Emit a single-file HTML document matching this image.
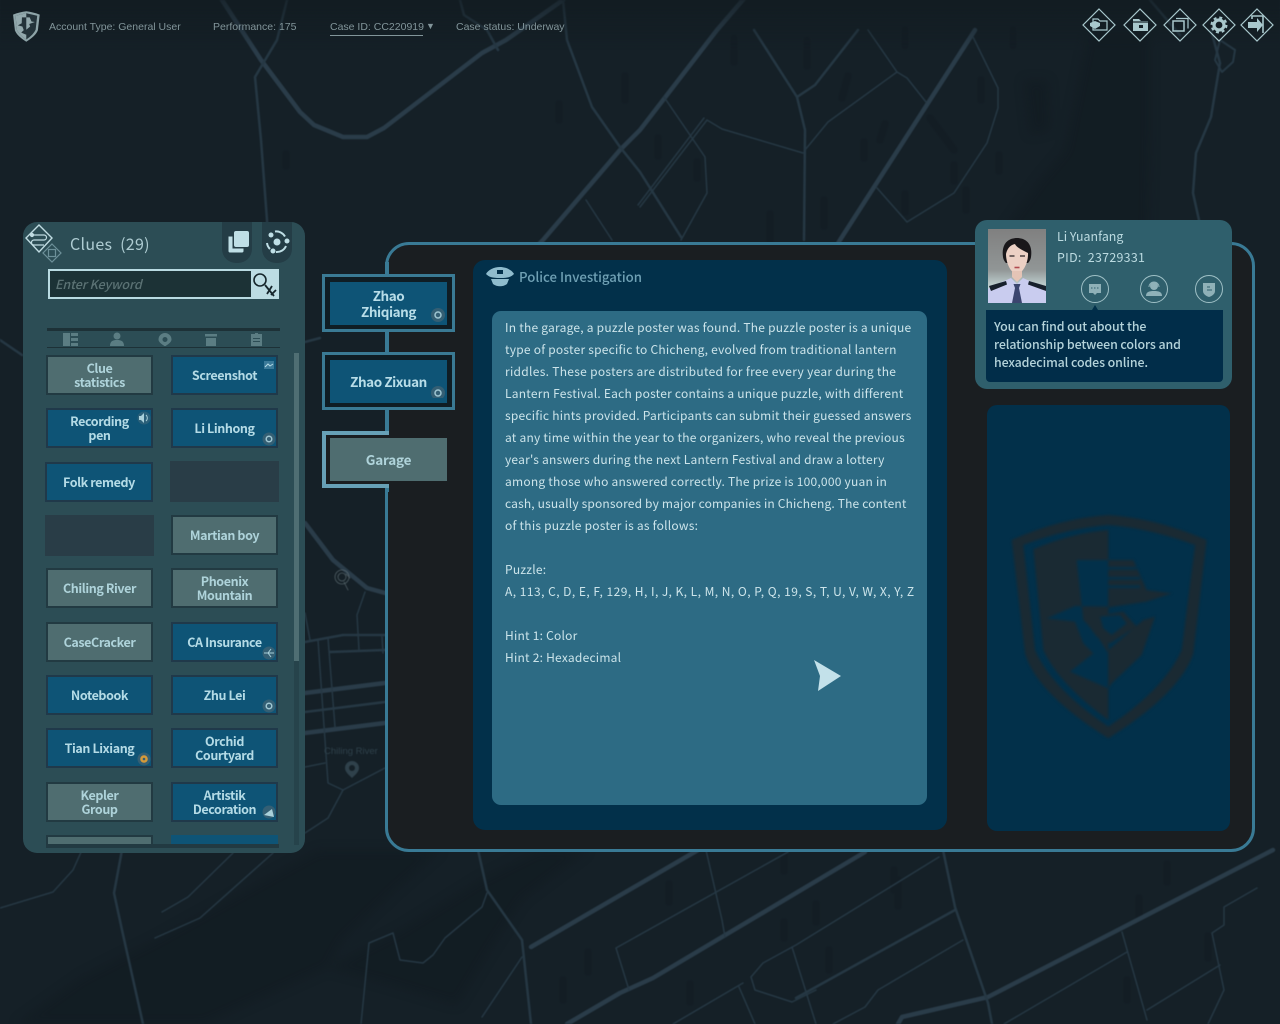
<!DOCTYPE html>
<html><head><meta charset="utf-8"><style>
html,body{margin:0;padding:0;background:#152027;width:1280px;height:1024px;overflow:hidden}
body{font-family:"Noto Sans CJK SC","Liberation Sans",sans-serif}
#w{position:absolute;left:0;top:0;width:1280px;height:1024px;overflow:hidden;filter:blur(.3px)}
.a{position:absolute}
.t{position:absolute;font:10.5px "Liberation Sans",sans-serif;color:#82959a;top:21px;white-space:nowrap}
.b{position:absolute;width:107px;height:40px;box-sizing:border-box;border:2px solid #20394a;background:#0e5476;color:#b4dbe6;font-weight:700;font-size:12.500px;line-height:14px;display:flex;align-items:center;justify-content:center;text-align:center;letter-spacing:-.4px}
.g{background:#4f6d70;border-color:#223a42;color:#aed3da}
.e{background:#293d47;border-color:#293d47}
.tab{position:absolute;left:322px;width:133px;box-sizing:border-box;border:3px solid #3a7a94;background:#0f1d24}
.ti{position:absolute;left:330px;width:117px;box-sizing:border-box;padding-bottom:2px;background:#0e5476;color:#b8dde8;font-weight:700;font-size:13.500px;line-height:16px;display:flex;align-items:center;justify-content:center;text-align:center;letter-spacing:-.45px}
.c{position:absolute;width:28px;height:28px;box-sizing:border-box;border:1px solid #9fc0c6;border-radius:50%}
</style></head><body><div id="w">
<svg class="a" style="left:0;top:0;filter:blur(.5px)" width="1280" height="1024" fill="none" stroke="#263844" stroke-linejoin="round" stroke-linecap="round">
<defs><linearGradient id="tg" x1="0" y1="0" x2="0" y2="1"><stop offset="0" stop-color="#111a1f" stop-opacity=".6"/><stop offset="1" stop-color="#111a1f" stop-opacity="0"/></linearGradient></defs>
<g fill="#111a20" stroke="none" opacity=".5" style="filter:blur(5px)">
<path d="M1089 30L1150 30L1150 130L1148 235L1000 235L1040 180L1065 150L1075 100Z"/>
<path d="M1024 80L1048 80L1050 130L1030 135Z"/>
<path d="M16 1024L82 977L155 940L318 850L441 850L392 893L343 940L327 968L204 1024Z"/>
<path d="M539 850L588 850L522 900L490 950L457 1005L384 983L327 968L400 930L480 880Z"/>
</g>
<g stroke="#111a20" stroke-width="7" opacity=".4">
<path d="M286 154v12M559 104v16M625 76v24M734 38v24M807 40v26M848 76l-6 22M658 138v18M697 162v16M770 214v26M824 200v26M885 124l-5 16M864 142v16M930 118l24 32M999 155v16M954 165v16M981 80v20M966 190v20M905 194v18M905 30v16M1013 30v16"/>
<path d="M669 884v18M898 880v26M816 904v18M784 922v16M829 950v20M588 952v20M563 980v20M690 984v18M1139 898v18M1167 864v18M1208 936v22M1127 980v20M784 855v16M894 870v20"/>
</g>
<g stroke-width="4.500" stroke="#2a3c49">
<path d="M563 0L506 40L482 53L384 128L367 137L343 137L314 125L300 112L261 60L222 0"/>
<path d="M640 130L717 30L760 -20M640 130L620 150L543 240L440 345"/>
<path d="M975 30L840 240L700 470"/>
<path d="M698 850L531 947"/><path d="M865 852L653 978L620 993L567 1024"/>
<path d="M1273 850L988 997L902 1017L898 1024"/>
<path d="M305 693L385 683M305 733L385 723"/>
<path d="M305 523L333 560L367 588L385 593"/>
</g>
<g stroke-width="2.500">
<path d="M287 0L277 40L255 77L261 140L267 220L270 300"/>
<path d="M563 0L567 40L592 107L620 147L640 172L681 237"/>
<path d="M754 30L797 97L805 130L804 240M797 97L815 85L858 30"/>
<path d="M478 850L487 890L522 940L531 1024"/>
<path d="M955 910L796 998"/><path d="M943 850L955 907L988 1003L992 1024"/>
<path d="M305 642L343 635L385 635M330 652L385 650M305 712L385 702"/>
<path d="M122 850L114 893L122 930L143 1024"/>
<path d="M1150 0L1180 35M1211 30L1220 63L1211 117L1196 153L1193 193L1199 220"/>
<path d="M1220 40L1235 50L1233 62L1222 72L1215 60Z" stroke-width="2"/>
<path d="M460 0L464 15L487 30L498 50"/>
<path d="M0 340L22 355M305 342L320 338"/>
</g>
<g stroke-width="1.500">
<path d="M664 97L705 157L707 193L681 240"/>
<path d="M805 150L828 122L897 72L868 30M897 72L907 78L926 102"/>
<path d="M973 37L998 88L998 108L987 143L954 193L907 222L877 188"/>
<path d="M707 120L722 129L803 153M707 120L640 207M704 118L638 205"/>
<path d="M586 200L612 240"/>
<path d="M82 850L73 870L53 892L0 908"/>
<path d="M233 853L188 897L162 912M273 853L200 918L155 938"/>
<path d="M487 893L482 907L445 938L433 955L423 963L400 960L393 933L369 943L361 1024"/>
<path d="M522 957L482 1017"/>
<path d="M706 850L722 920L725 937"/>
<path d="M788 852L616 948L629 990"/>
<path d="M939 857L796 945L763 963L751 977L755 990L792 1002L816 990"/>
<path d="M963 940L878 990L865 1007L833 1024"/>
<path d="M743 983L673 1024M739 987L755 1024M792 947L816 1024"/>
<path d="M1257 888L1224 907L1224 925L1212 933L1224 990L1208 1024"/>
<path d="M1122 932L1147 1020M1127 952L1004 1024M1220 965L1147 1010"/>
<path d="M365 592L357 615L359 650"/>
<path d="M318 640L328 783L343 790L385 768M328 638L335 727"/>
<path d="M382 637L383 653M305 767L325 763M343 790L328 818L305 833M305 613L310 640"/>
</g>
<g stroke="#6b7b81" stroke-width=".8" fill="none" opacity=".7"><circle cx="342" cy="577" r="7"/><circle cx="342" cy="577" r="4"/><path d="M344 582L348 590M346 574L350 578"/></g>
<path d="M352 761a7 7 0 0 1 7 7c0 4-4 7-7 10c-3-3-7-6-7-10a7 7 0 0 1 7-7Z" fill="#2f414b" stroke="none"/><circle cx="352" cy="768" r="3" fill="#152027" stroke="none"/>
<text x="324" y="754" font-family="Liberation Sans" font-size="9.500" fill="#2f414b" stroke="none">Chiling River</text>
<rect x="0" y="0" width="1280" height="50" fill="url(#tg)" stroke="none"/>
</svg>

<!-- top bar -->
<svg class="a" style="left:13px;top:11px" width="27" height="31" viewBox="95 100 590 680">
<path d="M385 105Q240 120 95 180L135 520Q170 640 385 775Q600 640 640 520L680 180Q530 120 385 105Z" fill="#8ea4a8"/>
<path d="M385 150L150 205L180 510Q230 620 385 725Q540 620 590 510L625 205Z" fill="#24333a"/>
<path d="M385 150L150 205L180 510Q230 620 385 725Z" fill="#93a9ad"/>
<path d="M290 240L460 240L500 330L575 340L450 385L470 440L410 530L385 620L275 575L330 520L300 440L200 415L285 370Z" fill="#24333a"/>
<path d="M385 240H460L500 330L575 340L450 385L470 440L385 510Z" fill="#93a9ad"/>
</svg>
<div class="t" style="left:49px;top:21px">Account Type: General User</div>
<div class="t" style="left:213px;top:21px">Performance: 175</div>
<div class="t" style="left:330px;top:21px">Case ID: CC220919</div>
<div class="a" style="left:330px;top:35px;width:93px;height:1px;background:#82959a"></div>
<div class="t" style="left:426px;top:21px;font-size:9px">▼</div>
<div class="t" style="left:456px;top:21px">Case status: Underway</div>
<svg class="a" style="left:1060px;top:0" width="220" height="50" fill="none" stroke="#a9c8cd" stroke-width="1.200">
<path d="M39 9L55 25L39 41L23 25Z"/><path d="M33 19h5l2 2h7v9H33z"/><path d="M30 23l5-2l5 2v3l-5 3l-5-3z" fill="#a9c8cd" stroke="none"/>
<path d="M80 9L96 25L80 41L64 25Z"/><path d="M73 19h6l2 2h7v10H73z" fill="#a9c8cd" stroke="none"/><rect x="79" y="25" width="4" height="3" fill="#152027" stroke="none"/><path d="M73 22h15" stroke="#152027"/>
<path d="M120 9L136 25L120 41L104 25Z"/><rect x="113" y="21" width="11" height="10" stroke-width="1.500"/><path d="M116 18.500h12v10" />
<path d="M159 9L175 25L159 41L143 25Z"/><circle cx="159" cy="25" r="5" stroke-width="3.200"/><circle cx="159" cy="25" r="7.500" stroke-width="2" stroke-dasharray="3 2.900"/>
<path d="M197 9L213 25L197 41L181 25Z"/><path d="M192 19V16h11v17" stroke-width="1.600"/><path d="M188 22h9v-4l6 7l-6 7v-4h-9z" fill="#a9c8cd" stroke="none"/>
</svg>

<!-- clues panel -->
<div class="a" style="left:23px;top:222px;width:282px;height:631px;background:#2c4d55;border-radius:14px"></div>
<svg class="a" style="left:23px;top:222px" width="50" height="45" fill="none" stroke="#c0dce2" stroke-width="1.200">
<path d="M16 3L29 16L16 30L3 16Z" stroke-width="1.400"/><path d="M9 13h12a2.500 2.500 0 0 1 0 5H11a2.500 2.500 0 0 0 0 5h10" /><circle cx="9" cy="13" r="1.500" fill="#c0dce2"/>
<path d="M29 22L38 31L29 40L20 31Z" stroke="#6d9099"/><rect x="25.500" y="27.500" width="7" height="7" stroke="#6d9099"/>
</svg>
<div class="a" style="left:70px;top:232px;font-size:16px;line-height:22px;color:#aeccd2;white-space:pre;letter-spacing:.3px">Clues  (29)</div>
<div class="a" style="left:222px;top:222px;width:30px;height:41px;background:#243d46;border-radius:0 0 14px 14px"></div>
<div class="a" style="left:262px;top:222px;width:30px;height:41px;background:#243d46;border-radius:0 0 14px 14px"></div>
<svg class="a" style="left:222px;top:226px" width="72" height="30" fill="#bfdfe6">
<rect x="12" y="5" width="15" height="16" rx="2"/><path d="M6 10h5v12h11v3a2 2 0 0 1-2 2H8a2 2 0 0 1-2-2z" stroke="#243d46"/>
<circle cx="55" cy="16" r="3.500"/><circle cx="49" cy="9" r="2.500"/><circle cx="65" cy="15" r="2.500"/><circle cx="51" cy="25" r="2.500"/>
<path d="M45 17a10 10 0 0 0 3 6M54 26a10 10 0 0 0 10-6M53 5.500a10 10 0 0 1 10 5" fill="none" stroke="#bfdfe6" stroke-width="2"/>
</svg>
<div class="a" style="left:48px;top:269px;width:231px;height:30px;box-sizing:border-box;border:2px solid #b9dbe2;background:#1c3236"></div>
<div class="a" style="left:251px;top:269px;width:28px;height:30px;background:#bcdce3"></div>
<svg class="a" style="left:251px;top:269px" width="28" height="30" fill="none" stroke="#16262c" stroke-width="1.600"><circle cx="9" cy="11" r="6"/><path d="M14 16l9 11M21 17l-5 8M25 21l-5 5" stroke-width="1.800"/></svg>
<div class="a" style="left:55px;top:275px;font-size:12.500px;line-height:18px;font-style:italic;color:#5b7274;font-weight:500;letter-spacing:-.1px">Enter Keyword</div>
<div class="a" style="left:47px;top:328px;width:233px;height:3px;background:#1d3137"></div>
<div class="a" style="left:47px;top:347px;width:233px;height:1px;background:#1d3137"></div>
<svg class="a" style="left:47px;top:332px" width="233" height="14" fill="#5b7d83">
<path d="M16 1h7v13h-7zM24 1h7v3h-7zM24 6h7v3h-7zM24 11h7v3h-7z"/>
<circle cx="70" cy="4" r="3.500"/><path d="M63 14c0-5 3-6 7-6s7 1 7 6z"/>
<path fill-rule="evenodd" d="M118 1a6.500 6.500 0 0 1 6.500 6.500c0 3-4 5-6.500 7c-2.500-2-6.500-4-6.500-7A6.500 6.500 0 0 1 118 1zM118 5a2.500 2.500 0 1 0 .01 0z"/>
<path d="M158 2h12v2.500h-12zM159 6h10v8h-10z"/><path fill-rule="evenodd" d="M204 2h4v-1h3v1h4v12h-11zM206 6v1h7v-1zM206 9v1h7v-1z"/>
</svg>
<div class="b g" style="left:46px;top:355px">Clue<br>statistics</div>
<div class="b" style="left:171px;top:355px">Screenshot</div>
<div class="b" style="left:46px;top:408px">Recording<br>pen</div>
<div class="b" style="left:171px;top:408px">Li Linhong</div>
<div class="b" style="left:45px;top:462px;width:108px">Folk remedy</div>
<div class="b e" style="left:170px;top:461px;width:109px;height:41px"></div>
<div class="b e" style="left:45px;top:515px;width:109px;height:41px"></div>
<div class="b g" style="left:171px;top:515px">Martian boy</div>
<div class="b g" style="left:46px;top:568px">Chiling River</div>
<div class="b g" style="left:171px;top:568px">Phoenix<br>Mountain</div>
<div class="b g" style="left:46px;top:622px">CaseCracker</div>
<div class="b" style="left:171px;top:622px">CA Insurance</div>
<div class="b" style="left:46px;top:675px">Notebook</div>
<div class="b" style="left:171px;top:675px">Zhu Lei</div>
<div class="b" style="left:46px;top:728px">Tian Lixiang</div>
<div class="b" style="left:171px;top:728px">Orchid<br>Courtyard</div>
<div class="b g" style="left:46px;top:782px">Kepler<br>Group</div>
<div class="b" style="left:171px;top:782px">Artistik<br>Decoration</div>
<div class="a" style="left:46px;top:835px;width:107px;height:10px;box-sizing:border-box;border:2px solid #223a42;border-bottom:0;background:#4f6d70;overflow:hidden"></div>
<div class="a" style="left:171px;top:835px;width:107px;height:10px;background:#0e5476"></div>
<div class="a" style="left:46px;top:844px;width:233px;height:4px;background:#223a42"></div>
<div class="a" style="left:294px;top:353px;width:5px;height:492px;background:#26434b"></div>
<div class="a" style="left:294px;top:353px;width:5px;height:308px;background:#4f6e73"></div>
<svg class="a" style="left:0;top:0;pointer-events:none" width="300" height="850">
<rect x="264" y="361" width="10" height="8" fill="#3a7a99"/><path d="M265 367l3-3l2 2l3-2" stroke="#b4dbe6" fill="none"/>
<circle cx="144" cy="418" r="6.500" fill="#2b6079"/><path d="M139 416h2l3-3v10l-3-3h-2z" fill="#a9d0da"/><path d="M146 415a4 4 0 0 1 0 6" stroke="#a9d0da" fill="none"/>
<circle cx="269" cy="439" r="6.500" fill="#345f74"/><circle cx="269" cy="439" r="2.800" fill="none" stroke="#9fc6d2" stroke-width="1.500"/>
<circle cx="269" cy="653" r="6.500" fill="#345f74"/><path d="M264 653h10M268 653l3-4M268 653l3 4" stroke="#a9d0da" fill="none"/>
<circle cx="269" cy="706" r="6.500" fill="#345f74"/><circle cx="269" cy="706" r="2.800" fill="none" stroke="#9fc6d2" stroke-width="1.500"/>
<circle cx="144" cy="759" r="6.500" fill="#345f74"/><circle cx="144" cy="759" r="3.800" fill="#d49a3a"/><circle cx="144" cy="759" r="1.300" fill="#345f74"/>
<circle cx="269" cy="812" r="6.500" fill="#345f74"/><path d="M264 815l8-6l2 8z" fill="#a9d0da"/>
</svg>

<!-- main frame -->
<div class="a" style="left:385px;top:242px;width:870px;height:610px;box-sizing:border-box;border:3px solid #397a95;border-radius:24px;background:#1a1e21"></div>
<div class="a" style="left:385px;top:262px;width:4px;height:230px;background:#397a95"></div>
<div class="tab" style="top:274px;height:58px"></div>
<div class="ti" style="top:282px;height:43px">Zhao<br>Zhiqiang</div>
<div class="tab" style="top:352px;height:58px"></div>
<div class="ti" style="top:360px;height:43px">Zhao Zixuan</div>
<div class="a" style="left:322px;top:431px;width:67px;height:57px;box-sizing:border-box;border:4px solid #67a0b6;border-right:0;background:#1a1e21"></div>
<div class="ti" style="top:438px;height:43px;background:#4f6d70;color:#afd3da;letter-spacing:-.2px">Garage</div>
<svg class="a" style="left:430px;top:308px" width="16" height="90"><circle cx="8" cy="7" r="7" fill="#345f74"/><circle cx="8" cy="7" r="3" fill="none" stroke="#9fc6d2" stroke-width="1.500"/><circle cx="8" cy="85" r="7" fill="#345f74"/><circle cx="8" cy="85" r="3" fill="none" stroke="#9fc6d2" stroke-width="1.500"/></svg>

<div class="a" style="left:473px;top:260px;width:474px;height:570px;background:#02304a;border-radius:12px"></div>
<svg class="a" style="left:486px;top:266px" width="29" height="22" fill="#8fbccd"><path d="M14 1C8 1 2 4 0 8c3 3 6 4 14 4s11-1 14-4c-2-4-8-7-14-7z"/><path d="M5 13h18l-2 5c-4 3-10 3-14 0z"/><rect x="11" y="4" width="6" height="4" fill="#02304a"/></svg>
<div class="a" style="left:519px;top:267px;font-size:13.200px;line-height:20px;color:#6fa0b4;font-weight:500;white-space:nowrap">Police Investigation</div>
<div class="a" style="left:492px;top:311px;width:435px;height:494px;background:#2d6b84;border-radius:9px"></div>
<div class="a" style="left:505px;top:317px;font-size:12px;line-height:22px;color:#cce4ea;white-space:nowrap;letter-spacing:.23px">In the garage, a puzzle poster was found. The puzzle poster is a unique<br>type of poster specific to Chicheng, evolved from traditional lantern<br><span style="letter-spacing:.3px">riddles. These posters are distributed for free every year during the</span><br>Lantern Festival. Each poster contains a unique puzzle, with different<br>specific hints provided. Participants can submit their guessed answers<br>at any time within the year to the organizers, who reveal the previous<br>year's answers during the next Lantern Festival and draw a lottery<br>among those who answered correctly. The prize is 100,000 yuan in<br><span style="letter-spacing:.16px">cash, usually sponsored by major companies in Chicheng. The content</span><br>of this puzzle poster is as follows:<br><br>Puzzle:<br><span style="letter-spacing:.47px">A, 113, C, D, E, F, 129, H, I, J, K, L, M, N, O, P, Q, 19, S, T, U, V, W, X, Y, Z</span><br><br>Hint 1: Color<br>Hint 2: Hexadecimal</div>

<!-- lower right panel -->
<div class="a" style="left:987px;top:405px;width:243px;height:426px;background:#02304a;border-radius:10px"></div>
<svg class="a" style="left:980px;top:480px;filter:blur(1.2px)" width="260" height="290" viewBox="0 0 780 870">
<path d="M385 105Q240 115 95 180L135 520Q170 640 385 775Q600 640 640 520L680 180Q530 115 385 105ZM385 135Q260 145 130 195L165 510Q215 625 385 740Q555 625 605 510L645 195Q510 145 385 135Z" fill="#1a2a33" fill-rule="evenodd"/>
<path d="M385 150Q270 160 160 208L190 510Q235 610 385 720Z" fill="#1a2a33"/>
<path d="M290 240H385V380L285 378L200 415L285 425L310 490L340 520L270 575L385 625V520L340 450L310 420Z" fill="#02304a"/>
<path d="M385 240H460L500 330L575 340L500 365L385 382Z" fill="#1a2a33"/>
<path d="M320 265H470M320 295H480M320 320H480" stroke="#02304a" stroke-width="8" fill="none"/>
<path d="M310 415L430 395L470 440L390 490L350 470Z" fill="#1a2a33"/>
<path d="M385 510L490 420L525 410L485 525L395 610L385 625Z" fill="#1a2a33"/>
<path d="M360 410L420 405L440 430L395 465L370 445Z" fill="#02304a"/>
</svg>

<!-- person card -->
<div class="a" style="left:975px;top:220px;width:257px;height:169px;background:#2f5f6c;border-radius:12px"></div>
<svg class="a" style="left:988px;top:229px;filter:blur(.3px)" width="58" height="74" viewBox="0 0 58 74">
<defs><linearGradient id="bg" x1="0" y1="0" x2="0" y2="1"><stop offset="0" stop-color="#808080"/><stop offset=".55" stop-color="#919696"/><stop offset=".8" stop-color="#c5d8d8"/></linearGradient></defs>
<rect width="58" height="74" fill="url(#bg)"/>
<path d="M15 28C13 14 21 9 29 9s16 5 14 19c-.5 3-2 5-3 6H18c-1-1-2.500-3-3-6Z" fill="#19171a"/>
<path d="M18 25c1-5 4-9 9-10c1 3 7 6 13 9c.5 8-4 20-11 21c-7-1-11-12-11-20Z" fill="#ecd0c4"/>
<path d="M21.500 27h5M32 27h5" stroke="#2a2225" stroke-width="1.300"/><path d="M26.500 38.500h5" stroke="#b04a50" stroke-width="1.600"/>
<path d="M24 42h10v6l-5 5l-5-5Z" fill="#e4c4b6"/>
<path d="M0 74V60c6-4 14-7 23-11l6 6l6-6c9 4 17 7 23 11v14Z" fill="#c9ccef"/>
<path d="M1 57l17-5l1 3.500L3 62Z" fill="#17202c"/><path d="M58 57l-17-5l-1 3.500L58 62Z" fill="#17202c"/>
<path d="M25.500 55h7l-1.500 4l3 15h-10l3-15Z" fill="#3b456f"/>
</svg>
<div class="a" style="left:1057px;top:227px;font-size:12.400px;line-height:18px;color:#bcdbe1;white-space:nowrap">Li Yuanfang</div>
<div class="a" style="left:1057px;top:248px;font-size:12.400px;line-height:18px;color:#bcdbe1;white-space:pre;letter-spacing:.3px">PID:  23729331</div>
<div class="c" style="left:1081px;top:275px"></div><div class="c" style="left:1140px;top:275px"></div><div class="c" style="left:1195px;top:275px"></div>
<svg class="a" style="left:1080px;top:275px" width="145" height="36" fill="#8fb1b8">
<path d="M9 9h12v9h-4l-2 2l-2-2H9z"/><path d="M11 13h8" stroke="#2f5f6c" stroke-dasharray="1.500 1.500"/>
<circle cx="74" cy="11" r="4"/><path d="M66 21c0-4 3-5 8-5s8 1 8 5z"/><path d="M69 12a5 5 0 0 1 10 0" fill="none" stroke="#8fb1b8"/>
<path d="M123 8h12v8c0 3-3 5-6 6c-3-1-6-3-6-6z"/><path d="M127 12h3M127 15h5" stroke="#2f5f6c"/>
<path d="M15 30l-3 5h6z" fill="#01304a"/>
</svg>
<div class="a" style="left:986px;top:310px;width:237px;height:72px;background:#012d49;border-radius:0 0 4px 4px"></div>
<div class="a" style="left:994px;top:317px;font-size:12.400px;line-height:18px;color:#b4d3da;white-space:nowrap;font-weight:500;letter-spacing:-.1px">You can find out about the<br>relationship between colors and<br>hexadecimal codes online.</div>

<svg class="a" style="left:810px;top:655px" width="36" height="40"><path d="M4 5L31 21L8 36L10 21Z" fill="#c3e1ea"/></svg>
</div></body></html>
